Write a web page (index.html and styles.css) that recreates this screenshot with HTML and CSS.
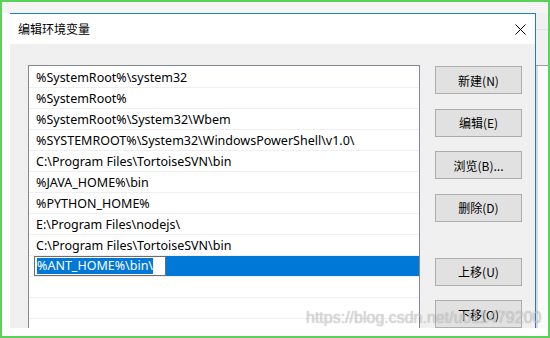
FILE: index.html
```html
<!DOCTYPE html>
<html lang="zh-CN">
<head>
    <meta charset="UTF-8">
    <meta name="viewport" content="width=device-width, initial-scale=1.0">
    <title>编辑环境变量</title>
    <link rel="stylesheet" href="styles.css">
</head>
<body>
    <div class="frame">
        <div class="top-strip"></div>
        <div class="main">
            <div class="dialog">
                <div class="titlebar">
                    <span class="title">编辑环境变量</span>
                    <svg class="close" width="11" height="11" viewBox="0 0 11 11">
                        <path d="M0.5 0.5 L10.5 10.5 M10.5 0.5 L0.5 10.5" stroke="#000" stroke-width="1" fill="none"/>
                    </svg>
                </div>
                <div class="body">
                    <div class="list">
                        <div class="row">%SystemRoot%\system32</div>
                        <div class="row">%SystemRoot%</div>
                        <div class="row">%SystemRoot%\System32\Wbem</div>
                        <div class="row">%SYSTEMROOT%\System32\WindowsPowerShell\v1.0\</div>
                        <div class="row">C:\Program Files\TortoiseSVN\bin</div>
                        <div class="row">%JAVA_HOME%\bin</div>
                        <div class="row">%PYTHON_HOME%</div>
                        <div class="row">E:\Program Files\nodejs\</div>
                        <div class="row">C:\Program Files\TortoiseSVN\bin</div>
                        <div class="row selected">
                            <div class="edit">
                                <div class="edit-box"><span class="sel">%ANT_HOME%\bin\</span></div>
                            </div>
                        </div>
                        <div class="row"></div>
                        <div class="row"></div>
                        <div class="row"></div>
                    </div>
                    <div class="buttons">
                        <div class="btn">新建(N)</div>
                        <div class="btn">编辑(E)</div>
                        <div class="btn">浏览(B)...</div>
                        <div class="btn">删除(D)</div>
                        <div class="btn up">上移(U)</div>
                        <div class="btn">下移(O)</div>
                    </div>
                </div>
            </div>
            <div class="behind">
                <div class="behind-head"></div>
                <div class="behind-panel"></div>
            </div>
        </div>
        <div class="watermark">https://blog.csdn.net/u011479200</div>
    </div>
</body>
</html>
```

FILE: styles.css
```css
body{margin: 0; padding: 0; background: #fff;}

.frame{
    position: relative;
    width: 550px;
    height: 338px;
    box-sizing: border-box;
    border: 2px solid #5ad25a;
    background: #fff;
    overflow: hidden;
    font-family: "Noto Sans", "Noto Sans CJK SC", sans-serif;
    font-size: 12px;
    color: #000;
}

.top-strip{height: 11px; background: #f4f4f4;}

.main{display: flex; height: 315px;}

.dialog{
    margin-left: 8px;
    width: 526px;
    box-sizing: border-box;
    border-top: 1px solid #1e7bd0;
    border-right: 1px solid #1e7bd0;
    display: flex;
    flex-direction: column;
}

.titlebar{
    height: 30px;
    background: #fff;
    display: flex;
    align-items: center;
    justify-content: space-between;
    padding: 0 9px 0 8px;
}
.title{font-family: "Noto Sans CJK SC", sans-serif; font-size: 12px; line-height: 1;}
.close{display: block;}

.body{
    flex: 1;
    background: #f0f0f0;
    display: flex;
    padding: 21px 0 0 18px;
    overflow: hidden;
}

.list{
    width: 392px;
    box-sizing: border-box;
    border: 1px solid #828790;
    border-bottom: none;
    background: #fff;
    padding-top: 1px;
    overflow: hidden;
    font-size: 12.5px;
}
.row{
    height: 20px;
    border-bottom: 1px solid #efefef;
    padding-left: 7px;
    display: flex;
    align-items: center;
    white-space: nowrap;
}
.row.selected{background: #0078d7; padding-left: 0;}

.edit{
    height: 100%;
    background: #fff;
    padding-left: 5px;
    display: flex;
}
.edit-box{
    border: 1px solid #6e6e6e;
    background: #fff;
    display: flex;
    align-items: center;
    padding: 0 12px 0 2px;
}
.sel{background: #0078d7; color: #fff; line-height: 16px;}

.buttons{
    margin-left: 15px;
    padding-top: 1px;
    display: flex;
    flex-direction: column;
    row-gap: 14.5px;
}
.btn{
    width: 87px;
    height: 28px;
    box-sizing: border-box;
    background: #e1e1e1;
    border: 1px solid #adadad;
    display: flex;
    align-items: center;
    justify-content: center;
    font-family: "Noto Sans CJK SC", sans-serif;
}
.btn.up{margin-top: 21.5px;}

.behind{flex: 1; display: flex; flex-direction: column;}
.behind-head{
    height: 36px;
    background: #f0f0f0;
    border-top: 16px solid #f0f0f0;
    box-shadow: inset 0 1px 0 #e3e3e3;
    border-bottom: 1px solid #a0a0a0;
}
.behind-panel{flex: 1; background: #fafafa; border-left: 2px solid #dadada;}

.watermark{
    position: absolute;
    left: 304px;
    top: 307px;
    font-family: "Liberation Sans", sans-serif;
    font-size: 16px;
    color: rgba(255, 255, 255, 0.55);
    text-shadow: 0 0 1px rgba(0, 0, 0, 0.4);
    white-space: nowrap;
}
```
